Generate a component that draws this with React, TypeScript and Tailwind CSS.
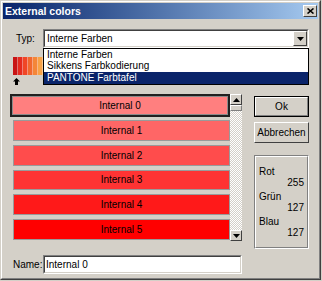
import React from "react";

const items = [
  { name: "Internal 0", color: "#ff7f7f" },
  { name: "Internal 1", color: "#ff6666" },
  { name: "Internal 2", color: "#ff4c4c" },
  { name: "Internal 3", color: "#ff3333" },
  { name: "Internal 4", color: "#ff1919" },
  { name: "Internal 5", color: "#ff0000" },
];

const strip = ["#c81414", "#e42a1e", "#f04626", "#f0682e", "#f48638", "#f8a246"];

function DownArrow() {
  return (
    <svg width="7" height="4" viewBox="0 0 7 4">
      <path d="M0 0h7L3.5 4z" fill="#000" />
    </svg>
  );
}

function UpArrow() {
  return (
    <svg width="7" height="4" viewBox="0 0 7 4">
      <path d="M0 4h7L3.5 0z" fill="#000" />
    </svg>
  );
}

function App() {
  return (
    <div className="w-[322px] h-[281px] bg-[#d4d0c8] font-['Liberation_Sans',Arial,sans-serif] text-[10px] text-black">
      <div className="flex h-[280px] w-[321px] flex-col border border-t-[#d4d0c8] border-l-[#d4d0c8] border-b-[#404040] border-r-[#404040]">
        <div className="flex h-full flex-col border border-t-white border-l-white border-b-[#808080] border-r-[#808080] p-px">
          {/* title bar */}
          <div className="flex h-[16px] items-center justify-between bg-gradient-to-r from-[#0a246a] to-[#a6caf0] pl-[2px] pr-[1px]">
            <span className="text-[10.5px] font-bold leading-none text-white">External colors</span>
            <div className="flex h-[12px] w-[14px] items-center justify-center border border-t-white border-l-white border-b-[#404040] border-r-[#404040] bg-[#d4d0c8]">
              <svg width="7" height="6" viewBox="0 0 7 6">
                <path d="M0.5 0.5l6 5M6.5 0.5l-6 5" stroke="#000" strokeWidth="1.6" />
              </svg>
            </div>
          </div>

          {/* content */}
          <div className="relative flex flex-col">
            <div className="ml-[13px] mt-[10px] flex h-[19px] items-center">
              <span className="w-[27px]">Typ:</span>
              <div className="flex h-[19px] w-[266px] border border-t-[#808080] border-l-[#808080] border-b-white border-r-white">
                <div className="flex flex-1 items-center border border-t-[#404040] border-l-[#404040] border-b-[#d4d0c8] border-r-[#d4d0c8] bg-white">
                  <span className="flex-1 pl-[2px]">Interne Farben</span>
                  <div className="flex h-full w-[14px] items-center justify-center border border-t-white border-l-white border-b-[#404040] border-r-[#404040] bg-[#d4d0c8]">
                    <DownArrow />
                  </div>
                </div>
              </div>
            </div>

            {/* open dropdown list */}
            <div className="absolute left-[40px] top-[29px] z-10 flex w-[266px] flex-col border border-black bg-white leading-[11px]">
              <div className="h-[11px] pl-[3px]">Interne Farben</div>
              <div className="h-[12px] pl-[3px]">Sikkens Farbkodierung</div>
              <div className="h-[12px] bg-[#0a246a] pl-[3px] text-white">PANTONE Farbtafel</div>
            </div>

            <div className="ml-[10px] mt-[9px] flex h-[18px] w-[30px]">
              {strip.map((c) => (
                <div key={c} className="h-full flex-1 border-r border-r-[#ffffff66]" style={{ backgroundColor: c }} />
              ))}
            </div>
            <div className="ml-[10px] flex h-[10px] items-end">
              <svg width="7" height="7" viewBox="0 0 7 7">
                <path d="M3.5 0L7 3.5H5V7H2V3.5H0z" fill="#000" />
              </svg>
            </div>

            {/* main area */}
            <div className="mt-[8px] flex">
              <div className="ml-[7px] flex h-[149px] w-[232px]">
                <div className="flex w-[220px] flex-col overflow-hidden">
                  {items.map((it, i) =>
                    i === 0 ? (
                      <div key={it.name} className="h-[25px] pt-px">
                        <div className="h-[23px] border-2 border-[#202020]">
                          <div
                            className="flex h-full items-center justify-center border border-[#8a8a8a]"
                            style={{ backgroundColor: it.color }}
                          >
                            {it.name}
                          </div>
                        </div>
                      </div>
                    ) : (
                      <div key={it.name} className="h-[25px] py-[2px] pl-[3px]">
                        <div
                          className="flex h-full items-center justify-center border border-[#9a9a9a]"
                          style={{ backgroundColor: it.color }}
                        >
                          {it.name}
                        </div>
                      </div>
                    )
                  )}
                </div>
                <div className="flex w-[12px] flex-col pt-px pb-px">
                  <div className="flex h-[11px] items-center justify-center border border-t-white border-l-white border-b-[#404040] border-r-[#404040] bg-[#d4d0c8]">
                    <UpArrow />
                  </div>
                  <div className="h-[6px] border border-t-white border-l-white border-b-[#808080] border-r-[#808080] bg-[#d4d0c8]" />
                  <div className="flex-1 bg-[image:repeating-conic-gradient(#ffffff_0_25%,#d4d0c8_0_50%)] bg-[length:2px_2px]" />
                  <div className="flex h-[11px] items-center justify-center border border-t-white border-l-white border-b-[#404040] border-r-[#404040] bg-[#d4d0c8]">
                    <DownArrow />
                  </div>
                </div>
              </div>

              <div className="ml-[12px] flex w-[55px] flex-col">
                <div className="mt-[3px] h-[21px] border border-black">
                  <div className="flex h-full items-center justify-center border border-t-white border-l-white border-b-[#808080] border-r-[#808080]">
                    Ok
                  </div>
                </div>
                <div className="mt-[5px] flex h-[21px] items-center justify-center border border-t-white border-l-white border-b-[#404040] border-r-[#404040]">
                  Abbrechen
                </div>
                <div className="mt-[12px] h-[94px] border border-t-[#808080] border-l-[#808080] border-b-white border-r-white">
                  <div className="flex h-full flex-col border border-t-white border-l-white border-b-[#808080] border-r-[#808080] px-[3px] pt-[9px] leading-[11px]">
                    <span>Rot</span>
                    <span className="text-right">255</span>
                    <span className="mt-[3px]">Grün</span>
                    <span className="text-right">127</span>
                    <span className="mt-[3px]">Blau</span>
                    <span className="text-right">127</span>
                  </div>
                </div>
              </div>
            </div>

            {/* name row */}
            <div className="ml-[10px] mt-[6px] flex h-[19px] items-center">
              <span className="w-[30px]">Name:</span>
              <div className="flex h-[19px] w-[199px] border border-t-[#808080] border-l-[#808080] border-b-white border-r-white">
                <div className="flex flex-1 items-center border border-t-[#404040] border-l-[#404040] border-b-[#d4d0c8] border-r-[#d4d0c8] bg-white pl-px">
                  Internal 0
                </div>
              </div>
            </div>
          </div>
        </div>
      </div>
    </div>
  );
}

export default App;
